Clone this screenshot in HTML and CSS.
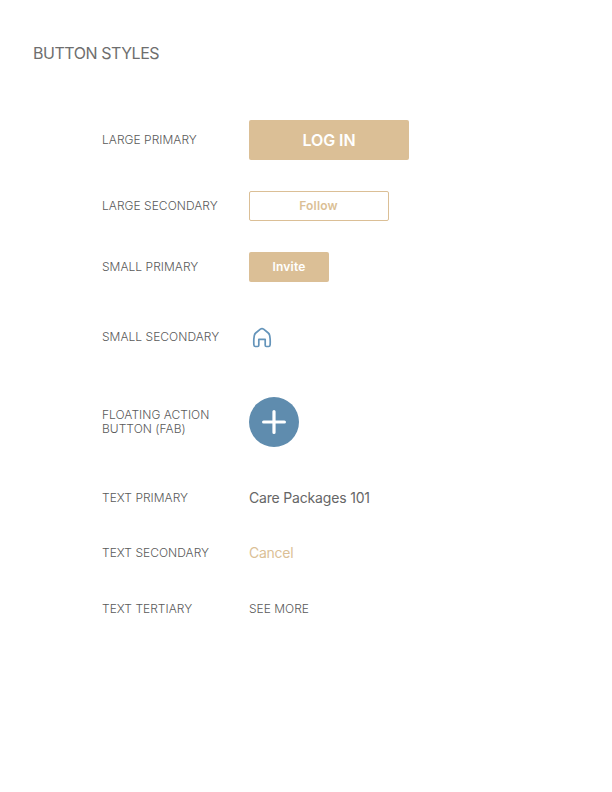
FILE: index.html
```html
<!DOCTYPE html>
<html lang="en">

<head>
    <meta charset="UTF-8">
    <meta name="viewport" content="width=device-width, initial-scale=1.0">
    <title>Button Styles</title>
    <link rel="stylesheet" href="styles.css">
</head>

<body>

    <h1 class="title">BUTTON STYLES</h1>

    <div class="list">

        <div class="row">
            <span class="label">LARGE PRIMARY</span>
            <button class="btn btn-primary btn-lg">LOG IN</button>
        </div>

        <div class="row row-outline">
            <span class="label">LARGE SECONDARY</span>
            <button class="btn btn-outline">Follow</button>
        </div>

        <div class="row row-sm">
            <span class="label">SMALL PRIMARY</span>
            <button class="btn btn-primary btn-sm">Invite</button>
        </div>

        <div class="row row-icon">
            <span class="label">SMALL SECONDARY</span>
            <button class="btn-icon" aria-label="Home">
                <svg width="26" height="26" viewBox="0 0 26 26" fill="none" stroke="#6494ba" stroke-width="1.7" stroke-linejoin="round">
                    <path d="M11.4 5.1 Q13 4 14.6 5.1 L19.3 9 Q20.4 10 20.7 11.6 Q21.5 16 21.1 21 Q21 22.5 19.6 22.5 H17.4 Q16.2 22.5 16.2 21.3 V15.4 H9.8 V21.3 Q9.8 22.5 8.6 22.5 H6.4 Q5 22.5 4.9 21 Q4.5 16 5.3 11.6 Q5.6 10 6.7 9 Z" />
                </svg>
            </button>
        </div>

        <div class="row row-fab">
            <span class="label">FLOATING ACTION<br>BUTTON (FAB)</span>
            <button class="fab" aria-label="Add">
                <svg width="50" height="50" viewBox="0 0 50 50" stroke="#fff" stroke-width="3.2" stroke-linecap="round">
                    <path d="M25 14.6 V35.4 M14.6 25 H35.4" />
                </svg>
            </button>
        </div>

        <div class="row row-text">
            <span class="label">TEXT PRIMARY</span>
            <a class="link">Care Packages 101</a>
        </div>

        <div class="row row-text">
            <span class="label">TEXT SECONDARY</span>
            <a class="link link-secondary">Cancel</a>
        </div>

        <div class="row row-text row-last">
            <span class="label">TEXT TERTIARY</span>
            <a class="link link-tertiary">SEE MORE</a>
        </div>

    </div>

</body>

</html>
```
FILE: styles.css
```css
* {
    box-sizing: border-box;
}

body {
    margin: 0;
    padding: 43px 0 0 33px;
    background: #fff;
    color: #666;
    font-family: Inter, "Liberation Sans", sans-serif;
}

.title {
    margin: 0;
    color: #6e6e6e;
    font-size: 16px;
    font-weight: 400;
    line-height: 20px;
    letter-spacing: -0.45px;
}

.list {
    padding: 57px 0 0 69px;
}

.row {
    display: flex;
    align-items: center;
}

.label {
    width: 147px;
    color: #5a5a5a;
    font-size: 12px;
    font-weight: 300;
    line-height: 14px;
    letter-spacing: 0.03px;
}

.btn {
    padding: 0;
    border: 0;
    border-radius: 2px;
    font-family: inherit;
    font-size: 12px;
    font-weight: 600;
}

.btn-primary {
    background: #dbbf96;
    color: #fff;
}

.btn-lg {
    width: 160px;
    height: 40px;
    font-size: 16px;
    letter-spacing: -0.1px;
}

.btn-outline {
    width: 140px;
    height: 30px;
    padding: 0 1px 2px 0;
    border: 1px solid #dbbf96;
    background: #fff;
    color: #dbbf96;
    letter-spacing: 0.2px;
}

.btn-sm {
    width: 80px;
    height: 30px;
    padding-bottom: 2px;
    letter-spacing: 0.2px;
}

.row-outline,
.row-sm {
    margin-top: 31px;
}

.row-icon {
    margin-top: 42px;
}

.btn-icon {
    display: flex;
    padding: 0;
    border: 0;
    background: none;
}

.row-fab {
    margin-top: 47px;
}

.fab {
    display: flex;
    width: 50px;
    height: 50px;
    padding: 0;
    border: 0;
    border-radius: 50%;
    background: #5f8cae;
}

.row-text {
    height: 20px;
    margin-top: 35px;
}

.row-fab + .row-text {
    margin-top: 41px;
}

.row-last {
    margin-top: 36px;
}

.link {
    font-size: 14px;
    line-height: 20px;
    letter-spacing: -0.18px;
}

.link-secondary {
    color: #dbbf96;
    letter-spacing: -0.25px;
}

.link-tertiary {
    color: #5a5a5a;
    font-size: 12px;
    font-weight: 300;
    letter-spacing: 0;
}
```
